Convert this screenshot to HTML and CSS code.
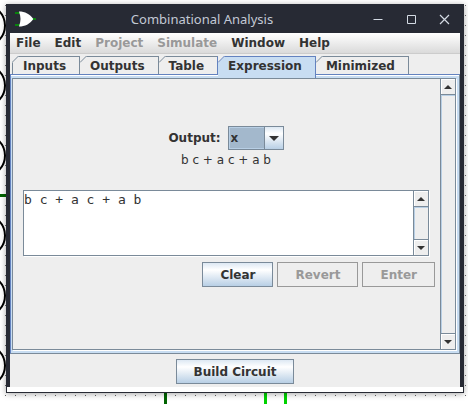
FILE: index.html
```html
<!DOCTYPE html>
<html lang="en">
<head>
<meta charset="utf-8">
<title>Combinational Analysis</title>
<link rel="stylesheet" href="styles.css">
</head>
<body>
<svg class="circuit" aria-hidden="true">
  <defs><pattern id="dots" width="10" height="10" patternUnits="userSpaceOnUse"><rect x="5" y="5" width="1" height="1" fill="#666"/></pattern></defs>
  <rect width="100%" height="100%" fill="url(#dots)"/>
  <g fill="none" stroke="#000" stroke-width="2">
    <circle cx="-16" cy="25.500" r="21"/><circle cx="-16" cy="85.500" r="21"/><circle cx="-16" cy="155.500" r="21"/>
    <circle cx="-16" cy="235.500" r="21"/><circle cx="-16" cy="295.500" r="21"/><circle cx="-16" cy="365.500" r="21"/>
  </g>
  <g shape-rendering="crispEdges">
    <rect x="0" y="194" width="8" height="3" fill="#006400"/>
    <rect x="164" y="380" width="3" height="40" fill="#006400"/>
    <rect x="264" y="380" width="3" height="40" fill="#00d200"/>
    <rect x="284" y="380" width="3" height="40" fill="#00d200"/>
  </g>
</svg>
<div class="window">
  <header class="titlebar">
    <svg class="logo" width="22" height="16" viewBox="0 0 22 16" aria-hidden="true">
      <path d="M0 2h5M0 14h5M17 8h4" stroke="#00a000" stroke-width="1.3"/>
      <path d="M4 .5C10 .5 15 3 18.300 8C15 13 10 15.500 4 15.500C6 10 6 6 4 .5Z" fill="#fff"/>
    </svg>
    <h1>Combinational Analysis</h1>
    <div class="controls">
      <button aria-label="Minimize"><svg width="14" height="14" viewBox="0 0 14 14"><path d="M2.500 7.500h9" stroke="#d3dae3"/></svg></button>
      <button aria-label="Maximize"><svg width="14" height="14" viewBox="0 0 14 14"><path d="M3.500 3.500h8v8h-8z" fill="none" stroke="#d3dae3"/></svg></button>
      <button aria-label="Close"><svg width="14" height="14" viewBox="0 0 14 14"><path d="M3 3l9 9M12 3l-9 9" stroke="#d3dae3" stroke-width="1.200"/></svg></button>
    </div>
  </header>
  <div class="body">
    <nav class="menu">
      <button>File</button><button>Edit</button><button disabled>Project</button><button disabled>Simulate</button><button>Window</button><button>Help</button>
    </nav>
    <div class="tabs" role="tablist">
      <button class="tab first" role="tab">Inputs<svg class="corner" width="7" height="7"><path d="M0 0H7L0 7Z"/><path class="edge" d="M0 6.500L6.500 0"/></svg></button>
      <button class="tab" role="tab">Outputs<svg class="corner" width="7" height="7"><path d="M0 0H7L0 7Z"/><path class="edge" d="M0 6.500L6.500 0"/></svg></button>
      <button class="tab before" role="tab">Table<svg class="corner" width="7" height="7"><path d="M0 0H7L0 7Z"/><path class="edge" d="M0 6.500L6.500 0"/></svg></button>
      <button class="tab active" role="tab" aria-selected="true">Expression<svg class="corner" width="7" height="7"><path d="M0 0H7L0 7Z"/><path class="edge" d="M0 6.500L6.500 0"/></svg></button>
      <button class="tab" role="tab">Minimized<svg class="corner" width="7" height="7"><path d="M0 0H7L0 7Z"/><path class="edge" d="M0 6.500L6.500 0"/></svg></button>
    </div>
    <main class="frame">
      <div class="pane">
        <div class="form">
          <div class="output">
            <label for="output">Output:</label>
            <div class="combo">
              <select id="output"><option>x</option></select>
              <span class="drop"><svg width="10" height="5" viewBox="0 0 10 5"><path d="M0 0H10L5 5Z"/></svg></span>
            </div>
          </div>
          <p class="formula">b c + a c + a b</p>
          <div class="editor">
            <textarea aria-label="Expression" spellcheck="false">b c + a c + a b</textarea>
            <div class="scrollbar">
              <button aria-label="Scroll text up"><svg width="8" height="4" viewBox="0 0 8 4"><path d="M0 4H8L4 0Z"/></svg></button>
              <span class="track"></span>
              <button aria-label="Scroll text down"><svg width="8" height="4" viewBox="0 0 8 4"><path d="M0 0H8L4 4Z"/></svg></button>
            </div>
          </div>
          <div class="actions">
            <button class="push">Clear</button><button class="push" disabled>Revert</button><button class="push" disabled>Enter</button>
          </div>
        </div>
        <div class="scrollbar">
          <button aria-label="Scroll up"><svg width="8" height="4" viewBox="0 0 8 4"><path d="M0 4H8L4 0Z"/></svg></button>
          <span class="track"></span>
          <button aria-label="Scroll down"><svg width="8" height="4" viewBox="0 0 8 4"><path d="M0 0H8L4 4Z"/></svg></button>
        </div>
      </div>
    </main>
    <footer><button class="push">Build Circuit</button></footer>
  </div>
  <div class="strip"></div>
</div>
</body>
</html>
```
FILE: styles.css
```css
* { box-sizing: border-box; }
body {
  margin: 0;
  min-height: 100vh;
  display: flex;
  padding: 4px 4px 11px 6px;
  background: #fff;
  font: bold 12px/16px "DejaVu Sans", sans-serif;
  color: #333;
  overflow: hidden;
}
button, select, textarea { font: inherit; color: inherit; margin: 0; padding: 0; border: 0; background: none; border-radius: 0; }
svg { display: block; }
.circuit { position: absolute; inset: 0; width: 100%; height: 100%; }
.window {
  position: relative;
  flex: 1;
  min-width: 0;
  display: flex;
  flex-direction: column;
  border: 1px solid #272a34;
  border-top: 0;
  background: #eee;
  box-shadow: 0 1px 6px rgba(0, 0, 0, .35);
}
.titlebar {
  display: grid;
  grid-template-columns: 22px 1fr 96px;
  align-items: center;
  height: 29px;
  padding-left: 8px;
  background: #272a34;
}
h1 { margin: 0; font: 13px/20px "Noto Sans", sans-serif; color: #c3c9d4; text-align: center; }
.controls { display: flex; gap: 19px; padding-left: 4px; }
.body {
  flex: 1;
  display: flex;
  flex-direction: column;
  border: solid #272a34;
  border-width: 0 3px;
}
.menu {
  display: flex;
  gap: 14px;
  height: 21px;
  padding: 0 6px 1px;
  border-bottom: 1px solid #ccc;
  background: linear-gradient(#fff, #dadada);
}
.menu button:disabled { color: #999; }
.tabs { display: flex; padding: 2px 2px 0; }
.tab {
  position: relative;
  height: 18px;
  padding: 0 13px 0 10px;
  border: solid #7a8a99;
  border-width: 1px 1px 0 0;
}
.tab.first { border-left-width: 1px; }
.tab.before { border-right-color: #6382bf; }
.tab.active { z-index: 1; height: 22px; margin-bottom: -4px; padding-bottom: 4px; background: #c8ddf2; border-color: #6382bf; }
.corner { position: absolute; left: 0; top: -1px; fill: #eee; }
.first .corner { left: -1px; }
.edge { fill: none; stroke: #7a8a99; }
.active .edge { stroke: #6382bf; }
.frame {
  flex: 1;
  display: flex;
  padding: 3px 2px 2px 1px;
  border: 1px solid #7a8a99;
  border-top-color: #6382bf;
  border-left-color: #6382bf;
  background: #c8ddf2;
  box-shadow: inset 0 1px #fff;
}
.pane {
  flex: 1;
  min-width: 0;
  display: flex;
  border: 1px solid #7a8a99;
  background: #eee;
  box-shadow: 1px 1px #fff;
  margin: 0 1px 1px 0;
}
.form { flex: 1; min-width: 0; padding: 47px 5px 0 10px; }
.output { display: flex; justify-content: center; align-items: center; gap: 7px; }
.combo { display: grid; width: 56px; height: 24px; border: 1px solid #7a8a99; }
.combo select, .drop { grid-area: 1 / 1; }
.combo select { appearance: none; width: 100%; padding: 0 20px 0 1px; background: #a3b8cc; border: 1px solid #b8cfe5; }
.drop {
  justify-self: end;
  width: 19px;
  display: grid;
  place-items: center;
  border-left: 1px solid #7a8a99;
  background: linear-gradient(#dde8f3, #fff 30%, #b8cfe5);
  pointer-events: none;
}
.drop path, .scrollbar path { fill: #333; }
.output, .formula { margin-right: 6px; }
.formula { margin-top: 2px; margin-bottom: 22px; font-weight: normal; text-align: center; }
.editor {
  display: flex;
  height: 66px;
  margin-right: 6px;
  border: 1px solid #7a8a99;
  background: #fff;
  box-shadow: 1px 1px #fff;
}
.editor textarea {
  flex: 1;
  min-width: 0;
  resize: none;
  overflow: hidden;
  outline: 0;
  padding-top: 1px;
  font: 13px/16px "DejaVu Sans Mono", monospace;
}
.scrollbar {
  display: flex;
  flex-direction: column;
  width: 15px;
  border-left: 1px solid #7a8a99;
  background: #eee;
}
.scrollbar button {
  height: 16px;
  display: grid;
  place-items: center;
  border-bottom: 1px solid #7a8a99;
  box-shadow: inset 1px 1px #fff;
}
.scrollbar .track + button { border-bottom: 0; border-top: 1px solid #7a8a99; }
.track { flex: 1; box-shadow: inset 1px 1px #b8cfe5; }
.actions { display: flex; justify-content: flex-end; gap: 4px; margin-top: 6px; }
.push {
  height: 25px;
  padding: 0 16px;
  border: 1px solid #7a8a99;
  background: linear-gradient(#dde8f3, #fff 30%, #b8cfe5);
}
.actions .push { padding: 0 17px; }
.push:disabled { border-color: #999; background: none; color: #999; }
footer { display: flex; justify-content: center; padding: 5px 0 3px; }
.strip { height: 5px; background: #fff; }
```
